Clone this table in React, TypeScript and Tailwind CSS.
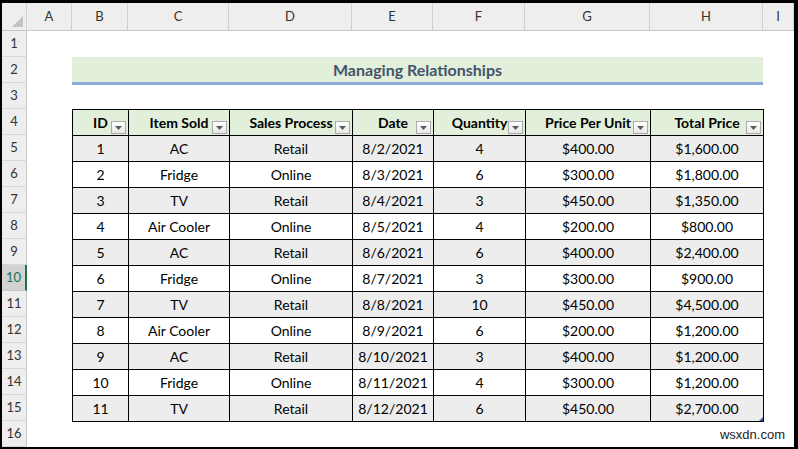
const rows = [
  ["1", "AC", "Retail", "8/2/2021", "4", "$400.00", "$1,600.00"],
  ["2", "Fridge", "Online", "8/3/2021", "6", "$300.00", "$1,800.00"],
  ["3", "TV", "Retail", "8/4/2021", "3", "$450.00", "$1,350.00"],
  ["4", "Air Cooler", "Online", "8/5/2021", "4", "$200.00", "$800.00"],
  ["5", "AC", "Retail", "8/6/2021", "6", "$400.00", "$2,400.00"],
  ["6", "Fridge", "Online", "8/7/2021", "3", "$300.00", "$900.00"],
  ["7", "TV", "Retail", "8/8/2021", "10", "$450.00", "$4,500.00"],
  ["8", "Air Cooler", "Online", "8/9/2021", "6", "$200.00", "$1,200.00"],
  ["9", "AC", "Retail", "8/10/2021", "3", "$400.00", "$1,200.00"],
  ["10", "Fridge", "Online", "8/11/2021", "4", "$300.00", "$1,200.00"],
  ["11", "TV", "Retail", "8/12/2021", "6", "$450.00", "$2,700.00"],
];

const headers = ["ID", "Item Sold", "Sales Process", "Date", "Quantity", "Price Per Unit", "Total Price"];

const letters = [
  { l: "A", w: "w-[45px]" },
  { l: "B", w: "w-[56px]" },
  { l: "C", w: "w-[101px]" },
  { l: "D", w: "w-[123px]" },
  { l: "E", w: "w-[81px]" },
  { l: "F", w: "w-[92px]" },
  { l: "G", w: "w-[125px]" },
  { l: "H", w: "w-[113px]" },
  { l: "I", w: "flex-1" },
];

function FilterButton() {
  return (
    <span className="absolute right-[2px] bottom-[1px] w-[15px] h-[13px] border border-[#ABABAB] bg-gradient-to-b from-white to-[#E8E8E8] flex items-center justify-center">
      <svg width="7" height="4" viewBox="0 0 7 4">
        <path d="M0 0h7L3.5 4z" fill="#595959" />
      </svg>
    </span>
  );
}

export default function App() {
  return (
    <div className="w-[798px] h-[449px] border-black border-t-[3px] border-l-2 border-r-4 border-b-2 bg-white flex flex-col overflow-hidden relative" style={{ fontFamily: "Lato, 'Open Sans', sans-serif" }}>
      {/* column letters */}
      <div className="flex h-[28px] bg-[#EEEEEE] border-b border-[#C8C8C8] text-[13px] text-[#333]">
        <div className="w-[25px] border-r border-[#D0D0D0] relative">
          <svg className="absolute right-[3px] bottom-[3px]" width="11" height="11" viewBox="0 0 11 11">
            <path d="M11 0v11H0z" fill="#C4C4C4" />
          </svg>
        </div>
        {letters.map((c) => (
          <div key={c.l} className={`${c.w} border-r border-[#D0D0D0] flex items-center justify-center`}>
            {c.l}
          </div>
        ))}
      </div>

      <div className="flex flex-1">
        {/* row numbers */}
        <div className="w-[25px] flex flex-col bg-[#EEEEEE] text-[13px] text-[#333]">
          {Array.from({ length: 16 }, (_, i) => i + 1).map((n) =>
            n === 10 ? (
              <div key={n} className="h-[26px] bg-[#D2D2D2] text-[#217346] border-b border-[#C8C8C8] border-r-2 border-r-[#217346] flex items-center justify-center">
                {n}
              </div>
            ) : (
              <div key={n} className="h-[26px] border-b border-[#D8D8D8] border-r border-r-[#C8C8C8] flex items-center justify-center">
                {n}
              </div>
            )
          )}
        </div>

        {/* sheet */}
        <div className="flex-1 pl-[45px] pt-[26px]">
          <div className="w-[691px] h-[28px] pt-[1px] bg-[#E2EFDA] border-b-[3px] border-[#8EA9DB] flex items-center justify-center text-[16px] font-bold text-[#44546A]">
            Managing Relationships
          </div>
          <div className="h-[24px]" />
          <div className="relative w-fit border-l border-t border-black text-[14px] text-black">
            <div className="grid grid-cols-[56px_101px_123px_81px_92px_125px_113px]">
              {headers.map((h) => (
                <div key={h} className="relative h-[26px] bg-[#E2EFDA] border-r border-b border-black flex items-center justify-center font-bold">
                  {h}
                  <FilterButton />
                </div>
              ))}
              {rows.map((r, i) =>
                r.map((v, j) => (
                  <div
                    key={`${i}-${j}`}
                    className={`h-[26px] border-r border-b border-black flex items-center justify-center ${i % 2 === 0 ? "bg-[#EDEDED]" : "bg-white"}`}
                  >
                    {v}
                  </div>
                ))
              )}
            </div>
            <svg className="absolute right-[1px] bottom-[1px]" width="4" height="4" viewBox="0 0 4 4">
              <path d="M4 0v4H0z" fill="#3A5A9C" />
            </svg>
          </div>
        </div>
      </div>

      <span className="absolute right-[9px] bottom-[3px] text-[13px] text-[#222]" style={{ fontFamily: "'Liberation Sans', Arial, sans-serif" }}>
        wsxdn.com
      </span>
    </div>
  );
}
